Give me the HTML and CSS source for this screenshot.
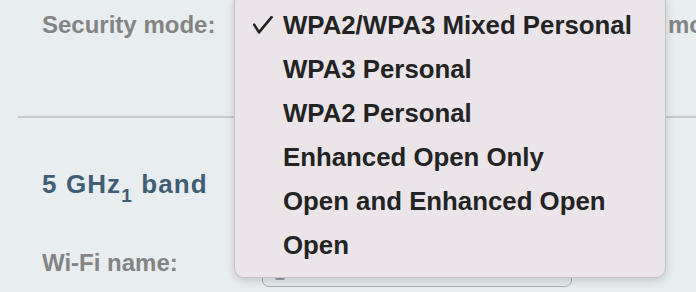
FILE: index.html
```html
<!DOCTYPE html>
<html lang="en">
<head>
  <meta charset="UTF-8" />
  <meta name="viewport" content="width=device-width, initial-scale=1.0"/>
  <title>Wi-Fi Settings</title>
  <link rel="stylesheet" href="styles.css">
</head>
<body>
  <div class="page">
    <div class="row row-mode">
      <span class="label">Security mode:</span>
      <span class="value">mode</span>
    </div>

    <div class="divider"></div>

    <h3 class="band">5 GHz<sub>1</sub> band</h3>

    <div class="row row-name">
      <span class="label">Wi-Fi name:</span>
      <span class="field"><span class="caret"></span></span>
    </div>

    <ul class="menu">
      <li class="selected">
        <span class="check">
          <svg width="20" height="18" viewBox="0 0 20 18"><path d="M1.2 8.6 L6 16.4 L18.6 1.2" fill="none" stroke="#222" stroke-width="2.6" stroke-linecap="round" stroke-linejoin="round"/></svg>
        </span>
        WPA2/WPA3 Mixed Personal
      </li>
      <li><span class="check"></span>WPA3 Personal</li>
      <li><span class="check"></span>WPA2 Personal</li>
      <li><span class="check"></span>Enhanced Open Only</li>
      <li><span class="check"></span>Open and Enhanced Open</li>
      <li><span class="check"></span>Open</li>
    </ul>
  </div>
</body>
</html>
```

FILE: styles.css
```css
body {
  margin: 0;
  font-family: 'Liberation Sans', Arial, sans-serif;
  background: #e8edf0;
  height: 292px;
  overflow: hidden;
}

.page {
  position: relative;
  padding: 5px 0 0 18px;
}

.row {
  display: flex;
  align-items: flex-start;
  padding-left: 24px;
}

.label {
  width: 220px;
  flex-shrink: 0;
  font-size: 24px;
  line-height: 40px;
  font-weight: bold;
  color: #838383;
}

.row-mode .value {
  padding-left: 406px;
  font-size: 24px;
  line-height: 40px;
  font-weight: bold;
  color: #838383;
  white-space: nowrap;
}

.divider {
  height: 2px;
  margin-top: 71px;
  background: #c6c9cb;
}

.band {
  margin: 50px 0 0;
  padding-left: 24px;
  font-size: 26px;
  line-height: 32px;
  letter-spacing: 1.1px;
  font-weight: bold;
  color: #3f5e76;
}

.band sub {
  font-size: 19px;
  line-height: 0;
  vertical-align: -9px;
}

.row-name {
  margin-top: 43px;
}

.field {
  width: 308px;
  height: 42px;
  border: 1px solid #a7aeb3;
  border-radius: 7px;
  position: relative;
}

.caret {
  position: absolute;
  left: 12px;
  bottom: 6px;
  width: 10px;
  height: 5px;
  background: #9aa0a4;
  border-radius: 2px;
}

.menu {
  position: absolute;
  left: 234px;
  top: -8px;
  width: 430px;
  margin: 0;
  padding: 10px 0;
  list-style: none;
  background: #ebe5ea;
  border: 1px solid #c4c2c6;
  border-radius: 10px;
  box-shadow: 0 3px 10px rgba(0, 0, 0, 0.16);
}

.menu li {
  display: flex;
  align-items: center;
  padding-left: 18px;
  font-size: 25.8px;
  line-height: 44px;
  font-weight: bold;
  color: #232323;
  white-space: nowrap;
}

.check {
  display: flex;
  align-items: center;
  width: 30px;
  flex-shrink: 0;
  height: 44px;
}
```
